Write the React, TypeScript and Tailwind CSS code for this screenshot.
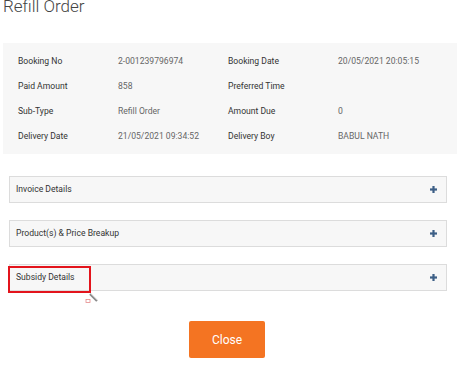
import React from "react";

const rows = [
  ["Booking No", "2-001239796974", "Booking Date", "20/05/2021 20:05:15"],
  ["Paid Amount", "858", "Preferred Time", ""],
  ["Sub-Type", "Refill Order", "Amount Due", "0"],
  ["Delivery Date", "21/05/2021 09:34:52", "Delivery Boy", "BABUL NATH"],
];

function Plus() {
  return (
    <svg width="7" height="7" viewBox="0 0 7 7">
      <rect x="2.4" y="0" width="2.2" height="7" fill="#3d5f86" />
      <rect x="0" y="2.4" width="7" height="2.2" fill="#3d5f86" />
    </svg>
  );
}

function Acc({ title, highlight }: { title: string; highlight?: boolean }) {
  return (
    <div className="relative h-[27px] w-[438px] ml-[9px] border border-[#dcdcdc] bg-[#f7f7f7] flex items-center justify-between pl-[6px] pr-[9px]">
      <span className="text-[8.6px] text-[#333]">{title}</span>
      <Plus />
      {highlight && (
        <>
          <div className="absolute left-[-2px] top-[1px] w-[83px] h-[27px] border-[2px] border-[#e3141c]" />
          <svg className="absolute left-[75px] top-[27px]" width="16" height="14" viewBox="0 0 16 14">
            <line x1="5" y1="2" x2="12" y2="9" stroke="#8a8a8a" strokeWidth="2.2" />
            <line x1="6" y1="2" x2="12" y2="8" stroke="#d0d0d0" strokeWidth="0.8" />
            <rect x="1" y="7.5" width="4" height="3" fill="none" stroke="#e58a8a" strokeWidth="0.8" />
          </svg>
        </>
      )}
    </div>
  );
}

export default function App() {
  return (
    <div className="w-[474px] h-[365px] bg-white overflow-hidden relative" style={{ fontFamily: "Roboto, 'Liberation Sans', sans-serif" }}>
      <div className="mt-[-4px] ml-[3px] text-[17px] leading-[20px] font-light text-[#444]">Refill Order</div>
      <div className="mt-[27px] ml-[3px] w-[454px] h-[111px] bg-[#f7f7f7] pt-[6px]">
        {rows.map((r, i) => (
          <div key={i} className="flex h-[25px] items-center text-[8.6px]">
            <span className="w-[100px] ml-[15px] text-[#333]">{r[0]}</span>
            <span className="w-[110px] text-[#666]">{r[1]}</span>
            <span className="w-[110px] text-[#333]">{r[2]}</span>
            <span className="text-[#666]">{r[3]}</span>
          </div>
        ))}
      </div>
      <div className="mt-[22px] flex flex-col gap-[17px]">
        <Acc title="Invoice Details" />
        <Acc title="Product(s) & Price Breakup" />
        <Acc title="Subsidy Details" highlight />
      </div>
      <div className="mt-[30px] flex">
        <button className="ml-[189px] w-[76px] h-[37px] rounded-[2px] bg-[#f47422] text-white text-[12px]">Close</button>
      </div>
    </div>
  );
}
